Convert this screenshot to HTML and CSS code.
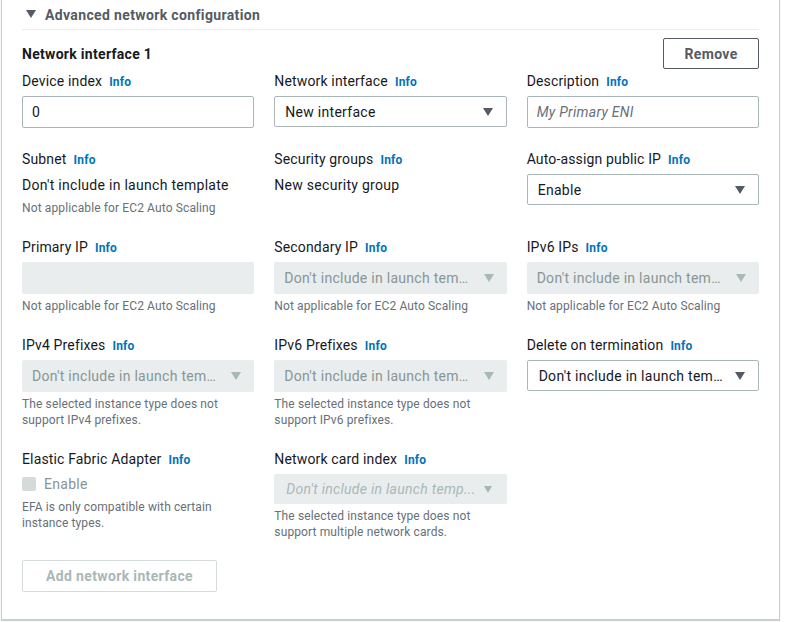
FILE: index.html
```html
<!DOCTYPE html>
<html>
<head>
<meta charset="utf-8">
<link rel="stylesheet" href="styles.css">
</head>
<body>
<div class="card">
  <div class="exp-header">
    <svg class="caret" width="10" height="8" viewBox="0 0 10 8"><path d="M0 0H10L5 8Z" fill="#545b64"/></svg>
    <span>Advanced network configuration</span>
  </div>
  <div class="divider"></div>

  <div class="ni-head">
    <span class="ni-title">Network interface 1</span>
    <button class="btn">Remove</button>
  </div>

  <div class="row first">
    <div class="field">
      <div class="label">Device index<a class="info">Info</a></div>
      <div class="input">0</div>
    </div>
    <div class="field">
      <div class="label">Network interface<a class="info">Info</a></div>
      <div class="select"><span class="sv">New interface</span><span class="arrow"></span></div>
    </div>
    <div class="field">
      <div class="label">Description<a class="info">Info</a></div>
      <div class="input placeholder">My Primary ENI</div>
    </div>
  </div>

  <div class="row">
    <div class="field">
      <div class="label">Subnet<a class="info">Info</a></div>
      <div class="value">Don't include in launch template</div>
      <div class="hint">Not applicable for EC2 Auto Scaling</div>
    </div>
    <div class="field">
      <div class="label">Security groups<a class="info">Info</a></div>
      <div class="value">New security group</div>
    </div>
    <div class="field">
      <div class="label">Auto-assign public IP<a class="info">Info</a></div>
      <div class="select"><span class="sv">Enable</span><span class="arrow"></span></div>
    </div>
  </div>

  <div class="row">
    <div class="field">
      <div class="label">Primary IP<a class="info">Info</a></div>
      <div class="input disabled"></div>
      <div class="hint">Not applicable for EC2 Auto Scaling</div>
    </div>
    <div class="field">
      <div class="label">Secondary IP<a class="info">Info</a></div>
      <div class="select disabled"><span class="sv">Don't include in launch tem…</span><span class="arrow"></span></div>
      <div class="hint">Not applicable for EC2 Auto Scaling</div>
    </div>
    <div class="field">
      <div class="label">IPv6 IPs<a class="info">Info</a></div>
      <div class="select disabled"><span class="sv">Don't include in launch tem…</span><span class="arrow"></span></div>
      <div class="hint">Not applicable for EC2 Auto Scaling</div>
    </div>
  </div>

  <div class="row">
    <div class="field">
      <div class="label">IPv4 Prefixes<a class="info">Info</a></div>
      <div class="select disabled"><span class="sv">Don't include in launch tem…</span><span class="arrow"></span></div>
      <div class="hint">The selected instance type does not<br>support IPv4 prefixes.</div>
    </div>
    <div class="field">
      <div class="label">IPv6 Prefixes<a class="info">Info</a></div>
      <div class="select disabled"><span class="sv">Don't include in launch tem…</span><span class="arrow"></span></div>
      <div class="hint">The selected instance type does not<br>support IPv6 prefixes.</div>
    </div>
    <div class="field">
      <div class="label">Delete on termination<a class="info">Info</a></div>
      <div class="select wide"><span class="sv">Don't include in launch tem…</span><span class="arrow"></span></div>
    </div>
  </div>

  <div class="row">
    <div class="field">
      <div class="label">Elastic Fabric Adapter<a class="info">Info</a></div>
      <div class="check"><span class="box"></span><span>Enable</span></div>
      <div class="hint hint-efa">EFA is only compatible with certain<br>instance types.</div>
    </div>
    <div class="field">
      <div class="label">Network card index<a class="info">Info</a></div>
      <div class="select disabled short"><span class="sv ital">Don't include in launch temp...</span><span class="arrow small"></span></div>
      <div class="hint">The selected instance type does not<br>support multiple network cards.</div>
    </div>
    <div class="field"></div>
  </div>

  <div class="add-row">
    <button class="btn btn-disabled">Add network interface</button>
  </div>
</div>
</body>
</html>
```
FILE: styles.css
```css
* { box-sizing: border-box; }
html, body { margin: 0; padding: 0; background: #ffffff; }
body {
  font-family: Roboto, "Liberation Sans", Arial, sans-serif;
  font-size: 14px;
  letter-spacing: 0.28px;
  color: #16191f;
  width: 785px;
  height: 622px;
  overflow: hidden;
}
.card {
  margin-left: 1px;
  width: 779px;
  border: 1px solid #c9cfcf;
  border-top: none;
  padding: 0 20px 27px 20px;
  box-shadow: 0 1px 1px rgba(0,28,36,0.2);
}
.exp-header {
  display: flex;
  align-items: center;
  height: 29px;
  padding-left: 4px;
  font-weight: 700;
  color: #545b64;
  line-height: 20px;
  letter-spacing: 0.36px;
}
.caret { margin-right: 9px; margin-top: -1px; }
.divider { height: 1px; background: #eaeded; }
.ni-head {
  display: flex;
  justify-content: space-between;
  align-items: center;
  margin-top: 8px;
  height: 31px;
}
.ni-title { font-weight: 700; line-height: 20px; letter-spacing: 0.3px; }
.btn {
  font-family: inherit;
  font-size: 14px;
  font-weight: 700;
  letter-spacing: 0.35px;
  color: #545b64;
  background: #fff;
  border: 1px solid #545b64;
  border-radius: 2px;
  height: 31px;
  width: 96px;
  padding: 0;
  line-height: 20px;
}
.btn-disabled {
  border-color: #d5dbdb;
  color: #aab7b8;
  height: 32px;
  width: 195px;
}
.row {
  display: grid;
  grid-template-columns: 1fr 1fr 1fr;
  column-gap: 20px;
  margin-top: 21px;
}
.row.first { margin-top: 2px; }
.field { display: flex; flex-direction: column; min-width: 0; }
.label {
  line-height: 20px;
  height: 20px;
  margin-bottom: 5px;
  white-space: nowrap;
  letter-spacing: 0.15px;
}
.info {
  font-size: 12px;
  font-weight: 700;
  letter-spacing: 0.2px;
  color: #0073bb;
  margin-left: 7px;
}
.input {
  height: 32px;
  border: 1px solid #aab7b8;
  border-radius: 2px;
  padding: 0 9px;
  line-height: 30px;
  color: #16191f;
}
.input.placeholder { font-style: italic; color: #687078; }
.input.disabled { background: #eaeded; border-color: #eaeded; }
.select {
  height: 31px;
  border: 1px solid #aab7b8;
  border-radius: 2px;
  padding: 0 13px 0 10px;
  display: flex;
  align-items: center;
  gap: 8px;
}
.select.wide { padding-left: 11px; }
.select .sv {
  flex: 1;
  min-width: 0;
  white-space: nowrap;
}
.select.disabled {
  height: 32px;
  background: #eaeded;
  border-color: #eaeded;
  color: #879596;
  padding-left: 9px;
  padding-right: 12px;
}
.select.disabled.short { height: 30px; padding-left: 11px; padding-right: 14px; gap: 4px; }
.ital { font-style: italic; color: #aab7b8; }
.arrow {
  width: 0; height: 0;
  border-left: 5px solid transparent;
  border-right: 5px solid transparent;
  border-top: 8px solid #545b64;
  flex: none;
}
.select.disabled .arrow { border-top-color: #aab7b8; border-left-width: 5.5px; border-right-width: 5.5px; }
.select.disabled .arrow.small { border-left-width: 4.5px; border-right-width: 4.5px; border-top-width: 7px; }
.value { line-height: 20px; margin-top: 1px; }
.hint {
  font-size: 12px;
  line-height: 16px;
  letter-spacing: 0.12px;
  color: #687078;
  margin-top: 4px;
}
.value + .hint { margin-top: 5px; }
.check {
  display: flex;
  align-items: center;
  height: 20px;
  color: #879596;
}
.check .box {
  width: 14px; height: 14px;
  background: #d5dbdb;
  border-radius: 2px;
  margin-right: 8px;
}
.hint-efa { margin-top: 5px; }
.add-row { margin-top: 20px; }
```
